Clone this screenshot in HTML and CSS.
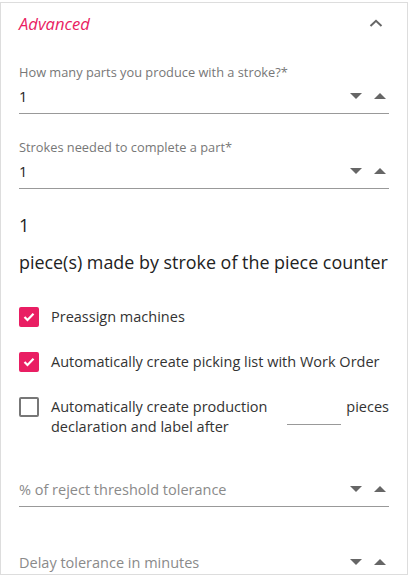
FILE: index.html
```html
<!DOCTYPE html>
<html lang="en">
<head>
  <meta charset="UTF-8">
  <title>Advanced</title>
  <meta name="viewport" content="width=device-width, initial-scale=1.0">
  <link rel="stylesheet" href="styles.css">
</head>
<body>
  <div class="card">
    <div class="card-head">
      <span class="card-title">Advanced</span>
      <svg class="chevron" width="14" height="8" viewBox="0 0 14 8"><path d="M1.5 7 L7 1.8 L12.5 7" fill="none" stroke="#666" stroke-width="2"/></svg>
    </div>

    <div class="field first">
      <label class="field-label">How many parts you produce with a stroke?*</label>
      <div class="field-row">
        <span class="value">1</span>
        <span class="spin"><i class="tri down"></i><i class="tri up"></i></span>
      </div>
    </div>

    <div class="field">
      <label class="field-label">Strokes needed to complete a part*</label>
      <div class="field-row">
        <span class="value">1</span>
        <span class="spin"><i class="tri down"></i><i class="tri up"></i></span>
      </div>
    </div>

    <p class="big-num">1</p>
    <p class="big-text">piece(s) made by stroke of the piece counter</p>

    <div class="check first-check">
      <span class="box checked"><svg width="12" height="10" viewBox="0 0 12 10"><path d="M1.5 5 L4.5 8 L10.5 1.8" fill="none" stroke="#fff" stroke-width="2.2"/></svg></span>
      <span class="check-text">Preassign machines</span>
    </div>
    <div class="check">
      <span class="box checked"><svg width="12" height="10" viewBox="0 0 12 10"><path d="M1.5 5 L4.5 8 L10.5 1.8" fill="none" stroke="#fff" stroke-width="2.2"/></svg></span>
      <span class="check-text">Automatically create picking list with Work Order</span>
    </div>
    <div class="check">
      <span class="box"></span>
      <span class="check-text wrap">Automatically create production declaration and label after</span>
      <span class="mini-input"></span>
      <span class="check-text">pieces</span>
    </div>

    <div class="field plain">
      <div class="field-row">
        <span class="placeholder">% of reject threshold tolerance</span>
        <span class="spin"><i class="tri down"></i><i class="tri up"></i></span>
      </div>
    </div>

    <div class="field plain last">
      <div class="field-row">
        <span class="placeholder">Delay tolerance in minutes</span>
        <span class="spin"><i class="tri down"></i><i class="tri up"></i></span>
      </div>
    </div>
  </div>
</body>
</html>
```
FILE: styles.css
```css
body { margin: 0; background: #fff; font-family: "Open Sans", "Liberation Sans", sans-serif; color: #333; }
.card { width: 408px; height: 573px; margin-top: 2px; border: 1px solid #ddd; padding: 0 18px; box-sizing: border-box; overflow: hidden; }
.card-head { height: 40px; display: flex; align-items: center; justify-content: space-between; padding-right: 6px; }
.card-title { font-size: 16.6px; font-style: italic; color: #e91e63; }
.chevron { display: block; }

.field { margin-top: 24px; border-bottom: 1px solid #999; }
.field.first { margin-top: 20px; }
.field-label { display: block; font-size: 12.8px; line-height: 18px; color: #777; }
.field-row { display: flex; align-items: center; justify-content: space-between; height: 24px; margin-top: 3px; padding-bottom: 5px; }
.value { font-size: 14.5px; color: #222; }
.placeholder { font-size: 14.5px; color: #8a8a8a; }
.spin { display: flex; gap: 12px; padding-right: 3px; }
.tri { display: block; width: 0; height: 0; border-left: 6px solid transparent; border-right: 6px solid transparent; }
.tri.down { border-top: 6px solid #666; }
.tri.up { border-bottom: 6px solid #666; }

.big-num { margin: 24px 0 0; font-size: 18px; line-height: 24px; color: #222; }
.big-text { margin: 13px 0 0; font-size: 17.9px; line-height: 24px; color: #222; white-space: nowrap; }

.check { display: flex; align-items: flex-start; margin-top: 25px; font-size: 14.5px; line-height: 20px; }
.check.first-check { margin-top: 33px; }
.box { flex: none; width: 20px; height: 20px; box-sizing: border-box; border: 2px solid #777; border-radius: 2px; margin-right: 12px; display: flex; align-items: center; justify-content: center; }
.box.checked { background: #e91e63; border-color: #e91e63; }
.check-text { color: #333; }
.check-text.wrap { flex: 1; }
.mini-input { flex: none; width: 54px; height: 27px; border-bottom: 1px solid #999; margin: 0 5px 0 18px; }

.field.plain { margin-top: 40px; }
.field.plain .field-row { margin-top: 0; }
.field.plain.last { margin-top: 43px; }
```
